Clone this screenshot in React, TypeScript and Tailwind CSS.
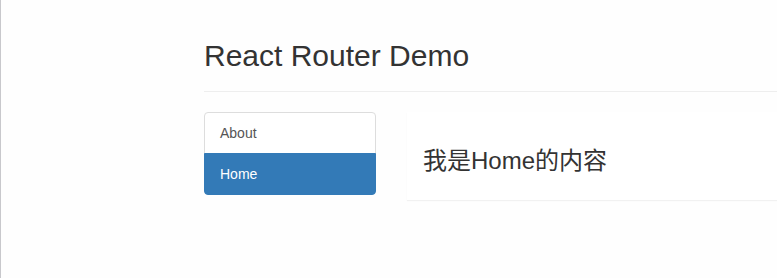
export default function App() {
  return (
    <div
      className="h-[278px] w-full overflow-hidden border-l border-[#c8c8cc] bg-[#fefefe] text-[#333]"
      style={{ fontFamily: '"Liberation Sans", Arial, "Noto Sans CJK SC", sans-serif' }}
    >
      <div className="ml-[203px] w-[1170px]">
        <div className="mb-5 border-b border-[#eee] pt-[39px] pb-[9px]">
          <h2 className="mb-[10px] text-[30px] leading-[1.1] font-normal">React Router Demo</h2>
        </div>

        <div className="flex items-start">
          <div className="flex w-[172px] flex-col text-[14px] leading-5">
            <a className="rounded-t-[4px] border border-[#ddd] bg-white px-[15px] py-[10px] text-[#555]">About</a>
            <a className="-mt-px rounded-b-[4px] border border-[#337ab7] bg-[#337ab7] px-[15px] py-[10px] text-white">Home</a>
          </div>

          <div className="ml-[31px] flex-1 border border-transparent bg-white shadow-[0_1px_1px_rgba(0,0,0,0.05)]">
            <div className="p-[15px]">
              <h3 className="mt-5 mb-[10px] text-[24px] leading-[1.1] font-normal">我是Home的内容</h3>
            </div>
          </div>
        </div>
      </div>
    </div>
  );
}
